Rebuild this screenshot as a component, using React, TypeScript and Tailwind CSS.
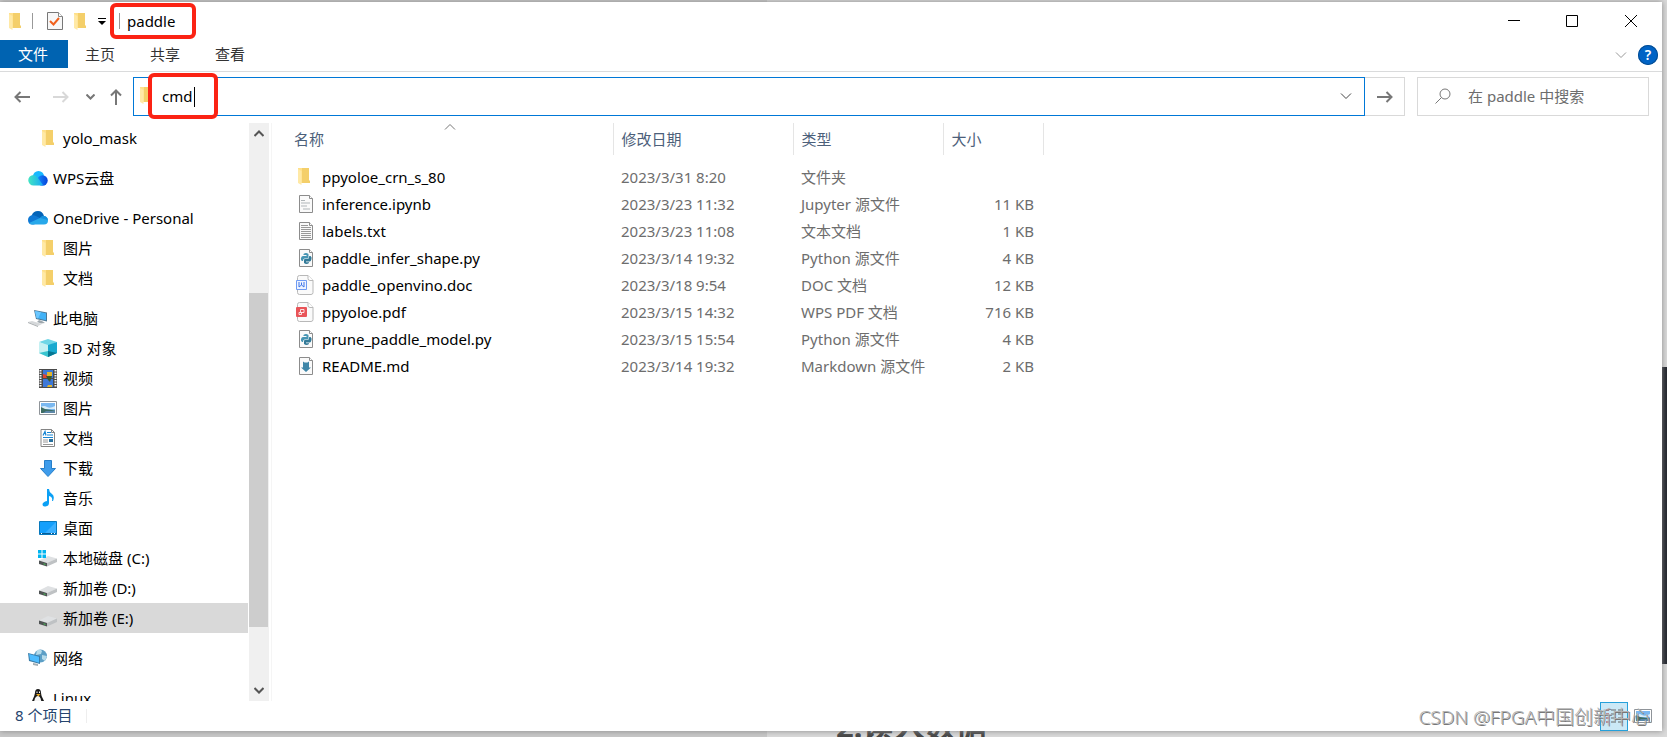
import { useState } from 'react';

const folder = (
  <svg viewBox="0 0 12 17" className="h-[17px] w-3">
    <path d="M0 0h11v13h1v2H0z" fill="#ffe08a" />
    <path d="M4 0h7v12.500h1v2.500H4z" fill="#f4cf6a" />
    <path d="M0 1l3.500 2v14L0 15z" fill="#ffe9a6" />
  </svg>
);

const Sheet = ({ children }: { children?: React.ReactNode }) => (
  <svg viewBox="0 0 16 18" className="h-[18px] w-4">
    <path d="M1.500.5h10l3 3v14h-13z" fill="#fafafa" stroke="#8c8c8c" />
    <path d="M11.500.5v3h3" fill="#fff" stroke="#8c8c8c" />
    {children}
  </svg>
);

const python = (
  <Sheet>
    <path d="M5.500 5Q8 3 10.500 5v3.500q0 1-1 1h-3q-1.500 0-1.500 2.500H4Q2.500 11 3 9t2-2h3.500V6h-3z" fill="#4795b3" />
    <path d="M11 14q-2.500 2-5 0v-3q0-1 1-1h3q1.200 0 1.200-3h1.300Q14 8 13.500 10T12 12.500H8v.8h3z" fill="#337a98" />
  </Sheet>
);

const WpsSheet = ({ color, children }: { color: string; children: React.ReactNode }) => (
  <svg viewBox="0 0 18 20" className="-ml-0.5 h-5 w-[18px]">
    <path d="M3.500.5h8.500l5 5v12q0 2-2 2H3.500q-2 0-2-2v-15q0-2 2-2z" fill="#fafafa" stroke="#b8b8b8" />
    <path d="M12 .5v3q0 2 2 2h3" fill="#fff" stroke="#b8b8b8" />
    <rect y="5" width="11" height="10" rx="1" fill={color} />
    {children}
  </svg>
);

const Drive = ({ windows }: { windows?: boolean }) => (
  <svg viewBox="0 0 20 18" className="h-[18px] w-5">
    <path d="M1 11.500L10 7l9 2.500-9 4.500z" fill="#dfe1e3" />
    <path d="M9 14l10-4.500v3.500L9 17.500z" fill="#bfc2c4" />
    <path d="M1 11.500L9 14v3.500L1 15z" fill="#4f5354" />
    <path d="M5.500 14.200l2 .7v1l-2-.7z" fill="#46c254" />
    {windows && <path d="M0 1h3.500v3.500H0zM4.500 1H8v3.500H4.500zM0 5.500h3.500V9H0zM4.500 5.500H8V9H4.500z" fill="#00b4f0" />}
  </svg>
);

const picture = (
  <svg viewBox="0 0 18 14" className="h-3.5 w-[18px]">
    <path d="M.5.5h17v13H.5z" fill="#fff" stroke="#8f9499" />
    <path d="M2 2h14v10H2z" fill="#7ab8f0" />
    <path d="M2 6q3-2 6 0t8-1v3H2z" fill="#d8ecf8" />
    <path d="M2 6l4 2 10 1.500V12H2z" fill="#3e6d63" />
    <path d="M7 10h9v2H4z" fill="#5c87a8" />
  </svg>
);

const icons: Record<string, React.ReactNode> = {
  folder,
  wps: (
    <svg viewBox="0 0 20 15" className="h-[15px] w-5">
      <defs>
        <linearGradient id="wpsLeft"><stop stopColor="#42e5c2" /><stop offset="1" stopColor="#17a9f5" /></linearGradient>
        <linearGradient id="wpsRight"><stop stopColor="#1289ff" /><stop offset="1" stopColor="#0743d8" /></linearGradient>
      </defs>
      <circle cx="10.500" cy="5.500" r="5.500" fill="#18b8ff" />
      <circle cx="14.500" cy="9.500" r="5.200" fill="url(#wpsRight)" />
      <path d="M5.500 4Q8 4 10 7l5 7q-1 .5-3 .5H5.500a5.200 5.200 0 010-10.500z" fill="url(#wpsLeft)" />
    </svg>
  ),
  onedrive: (
    <svg viewBox="0 0 20 14" className="h-3.5 w-5">
      <path d="M3.500 5Q5 0 10 0q4.500 0 6 5L11 9z" fill="#0364b8" />
      <path d="M4 13.500Q0 13 0 9t4.500-5Q7 4 9 5.500l6 3-9 5z" fill="#0f78d4" />
      <path d="M4 13.500Q2 13.500 1 12l11-5q2-2.500 4.500-2Q20 6 20 9.500q0 4-4 4z" fill="#28a8ea" />
      <path d="M12 7q2-2.500 4.500-2 3 .8 3.400 4z" fill="#1490df" />
    </svg>
  ),
  pc: (
    <svg viewBox="0 0 20 18" className="h-[18px] w-5">
      <path d="M6 1l13 2.500v9L8 10z" fill="#4d7895" />
      <path d="M7 2l11 2.300v7L8.500 9z" fill="#42b2f7" />
      <path d="M7 2l6 1.200L10 9.400 8.500 9z" fill="#6bc7ff" />
      <path d="M11 11l3 1 3 2-4 .5-4-1.500z" fill="#9fa8ae" />
      <path d="M0 13l4-1 10 3-4 2z" fill="#d5d8da" />
      <path d="M0 13l10 4v1L0 14z" fill="#a9adb0" />
    </svg>
  ),
  cube: (
    <svg viewBox="0 0 18 18" className="h-[18px] w-[18px]">
      <path d="M0 3l9-3 9 3-9 4z" fill="#6fd6e6" />
      <path d="M0 3l9 3v12l-9-4z" fill="#c5f1f3" />
      <path d="M18 3L9 6v12l9-4z" fill="#19a9cf" />
      <path d="M9 12l9 2-9 4z" fill="#067792" />
      <path d="M9 12l-9 2 9 4z" fill="#38c4cf" />
    </svg>
  ),
  video: (
    <svg viewBox="0 0 18 19" className="h-[19px] w-[18px]">
      <path d="M0 0h18v19H0z" fill="#4a4a4a" />
      <path d="M1.500 1v17M16.500 1v17" stroke="#f5f5f5" strokeWidth="2" strokeDasharray="1.500 1" />
      <path d="M4 1h10v8H4zM4 10h10v8H4z" fill="#3d78d8" />
      <path d="M4 5l4 1v3H4z" fill="#df4434" />
      <path d="M8 3h5v4H8zM9 16h4v2H8z" fill="#e1b52c" />
      <path d="M7 7h6l-2 6-2-2z" fill="#3a582c" />
    </svg>
  ),
  picture,
  doc: (
    <svg viewBox="0 0 16 18" className="h-[18px] w-4">
      <path d="M1 .5h10.500l3 3v14H1z" fill="#fff" stroke="#858585" />
      <path d="M11.500.5v3h3" fill="none" stroke="#858585" />
      <path d="M3 6.500l2-4 1 4M7 3.500h4M7 6h6M3 8.500h10" fill="none" stroke="#1685d3" strokeWidth="1.200" />
      <path d="M3 11h5M3 13h5M3 15.500h10" stroke="#999" />
      <path d="M9 10h4v3H9z" fill="#276f9d" />
    </svg>
  ),
  download: (
    <svg viewBox="0 0 16 17" className="h-[17px] w-4">
      <path d="M4.500.5h7v8h4L8 16.500.5 8.500h4z" fill="#3e9ceb" stroke="#277fc9" />
    </svg>
  ),
  music: (
    <svg viewBox="0 0 12 18" className="h-[18px] w-3">
      <path d="M5 0h2q0 3 3 5 3 2 1 7h-1q1-4-3-5v7q0 3-3.500 3.500Q.5 18 .5 15.500T5 12z" fill="#0ba0f5" />
    </svg>
  ),
  desktop: (
    <svg viewBox="0 0 18 14" className="h-3.5 w-[18px]">
      <path d="M.5.5h17v13H.5z" fill="#159ffb" stroke="#0879bd" />
      <path d="M6 12L17 1v11z" fill="#3cb0ff" />
      <path d="M1 12.500h16" stroke="#075c94" />
      <path d="M2 12.500h1M12 12.500h1M15 12.500h1" stroke="#fff" />
    </svg>
  ),
  driveC: <Drive windows />,
  drive: <Drive />,
  network: (
    <svg viewBox="0 0 20 18" className="h-[18px] w-5">
      <circle cx="12.500" cy="7" r="6.500" fill="#5c9fc6" />
      <path d="M9 1q4-1 5 1l-1 3-5 1zM14 6l5 1-2 5-3-2z" fill="#b6dbea" />
      <path d="M0 4l12 3v8L1 12z" fill="#3a7da9" />
      <path d="M1 5l10 2.700v6L2 11z" fill="#4dbcff" />
      <path d="M5 14l5 1v2l-5-1z" fill="#a3adb3" />
    </svg>
  ),
  linux: (
    <svg viewBox="0 0 16 18" className="h-[18px] w-4">
      <path d="M5 4q0-4 3-4t3 4q0 3 2.500 7t2 7h-15q0-3 2-7T5 4z" fill="#191919" />
      <path d="M8 7q2 0 3 4t1 7H4q-.5-3 .5-7T8 7z" fill="#f5f5f5" />
      <path d="M6.500 2.500h1V4h-1zM9 2.500h1V4H9z" fill="#fff" />
      <path d="M6 5h4.500L8.500 7.500z" fill="#eba81c" />
    </svg>
  ),
  notebook: <Sheet><path d="M3 5.500h4M3 8h9M3 11h6M5 14h7" stroke="#b0b6b9" /></Sheet>,
  text: <Sheet><path d="M3 3.500h7M3 5.500h10M3 7.500h10M3 9.500h10M3 11.500h10M3 13.500h10M3 15.500h10" stroke="#999" /></Sheet>,
  python,
  word: (
    <WpsSheet color="#6f9bf3">
      <path d="M1 6h9v8H1z" fill="#eff4ff" />
      <path d="M3 7v5l2.500-2L8 12V7M5.500 7.500v2.500" fill="none" stroke="#3d74e8" />
    </WpsSheet>
  ),
  pdf: (
    <WpsSheet color="#e95458">
      <path d="M4.500 10.500v-3H8v3H3v2h2.500v-2" fill="none" stroke="#fff" strokeOpacity=".8" />
    </WpsSheet>
  ),
  markdown: <Sheet><path d="M5 4.500l1.500 1h3l1.500-1v6h2L8 15l-5-4.500h2z" fill="#3f86a8" /></Sheet>,
};

const tree = [
  { name: 'yolo_mask', icon: 'folder', child: true },
  { name: 'WPS云盘', icon: 'wps' },
  { name: 'OneDrive - Personal', icon: 'onedrive' },
  { name: '图片', icon: 'folder', child: true },
  { name: '文档', icon: 'folder', child: true },
  { name: '此电脑', icon: 'pc' },
  { name: '3D 对象', icon: 'cube', child: true },
  { name: '视频', icon: 'video', child: true },
  { name: '图片', icon: 'picture', child: true },
  { name: '文档', icon: 'doc', child: true },
  { name: '下载', icon: 'download', child: true },
  { name: '音乐', icon: 'music', child: true },
  { name: '桌面', icon: 'desktop', child: true },
  { name: '本地磁盘 (C:)', icon: 'driveC', child: true },
  { name: '新加卷 (D:)', icon: 'drive', child: true },
  { name: '新加卷 (E:)', icon: 'drive', child: true, selected: true },
  { name: '网络', icon: 'network' },
  { name: 'Linux', icon: 'linux' },
];

const files = [
  { name: 'ppyoloe_crn_s_80', icon: 'folder', date: '2023/3/31 8:20', type: '文件夹', size: '' },
  { name: 'inference.ipynb', icon: 'notebook', date: '2023/3/23 11:32', type: 'Jupyter 源文件', size: '11 KB' },
  { name: 'labels.txt', icon: 'text', date: '2023/3/23 11:08', type: '文本文档', size: '1 KB' },
  { name: 'paddle_infer_shape.py', icon: 'python', date: '2023/3/14 19:32', type: 'Python 源文件', size: '4 KB' },
  { name: 'paddle_openvino.doc', icon: 'word', date: '2023/3/18 9:54', type: 'DOC 文档', size: '12 KB' },
  { name: 'ppyoloe.pdf', icon: 'pdf', date: '2023/3/15 14:32', type: 'WPS PDF 文档', size: '716 KB' },
  { name: 'prune_paddle_model.py', icon: 'python', date: '2023/3/15 15:54', type: 'Python 源文件', size: '4 KB' },
  { name: 'README.md', icon: 'markdown', date: '2023/3/14 19:32', type: 'Markdown 源文件', size: '2 KB' },
];

const Chevron = ({ up, className }: { up?: boolean; className: string }) => (
  <svg viewBox="0 0 12 8" className={className} fill="none" stroke="currentColor">
    <path d={up ? 'M1 6.500l5-5 5 5' : 'M1 1.500l5 5 5-5'} />
  </svg>
);

const Arrow = ({ className }: { className: string }) => (
  <svg viewBox="0 0 16 12" className={className} fill="none" stroke="currentColor" strokeWidth="2">
    <path d="M0 6h14M9.500 1l5 5-5 5" />
  </svg>
);

function TitleBar() {
  return (
    <header className="flex h-[38px] shrink-0 items-center">
      <div className="flex items-center pl-[9px]">
        {folder}
        <span className="ml-[11px] h-4 w-px bg-[#999]" />
        <button aria-label="属性" className="ml-3.5">
          <svg viewBox="0 0 16 18" className="h-[18px] w-4">
            <path d="M.5.5h11l4 4v13H.5z" fill="#f7f7f7" stroke="#777" />
            <path d="M11.500.5v4h4" fill="#fff" stroke="#888" />
            <path d="M3 9l3.500 3.500L12 6" fill="none" stroke="#f0601c" strokeWidth="2" />
          </svg>
        </button>
        <button aria-label="新建文件夹" className="ml-[11px]">{folder}</button>
        <button aria-label="自定义快速访问工具栏" className="ml-3">
          <svg viewBox="0 0 8 7" className="h-[7px] w-2"><path d="M0 0h8v1H0zM0 3h8L4 7z" /></svg>
        </button>
        <div className="ml-1 flex h-[36px] w-[86px] items-center rounded-md border-4 border-[#fb2314] pl-[5px]">
          <span className="h-4 w-px bg-[#999]" />
          <h1 className="ml-[7px] text-[15px]">paddle</h1>
        </div>
      </div>
      <div className="ml-auto flex items-center pr-[25px]">
        <button aria-label="最小化"><svg viewBox="0 0 12 12" className="h-3 w-3" stroke="#000"><path d="M0 5.500h12" /></svg></button>
        <button aria-label="最大化" className="ml-[46px]"><svg viewBox="0 0 12 12" className="h-3 w-3" stroke="#000" fill="none"><path d="M.5.5h11v11H.5z" /></svg></button>
        <button aria-label="关闭" className="ml-[47px]"><svg viewBox="0 0 12 12" className="h-3 w-3" stroke="#000"><path d="M0 0l12 12M12 0L0 12" /></svg></button>
      </div>
    </header>
  );
}

function Ribbon() {
  return (
    <nav className="flex h-8 shrink-0 items-start border-b border-[#dadbdc] text-[#333]">
      <button className="h-7 w-[68px] bg-[#0063b1] pr-0.5 text-white">文件</button>
      <button className="ml-[17px] h-7">主页</button>
      <button className="ml-[35px] h-7">共享</button>
      <button className="ml-[35px] h-7">查看</button>
      <button aria-label="展开功能区" className="ml-auto h-[30px] text-[#999]"><Chevron className="h-2 w-3.5" /></button>
      <button className="mt-[5px] mr-1 ml-2.5 h-5 w-5 rounded-full bg-[#0063c5] text-sm leading-5 font-semibold text-white ring-1 ring-[#064d91] ring-inset">?</button>
    </nav>
  );
}

function AddressBar() {
  const [path, setPath] = useState('cmd');
  const [query, setQuery] = useState('');

  return (
    <div className="flex shrink-0 items-center pt-[5px] pr-[13px] pb-[7px]">
      <div className="flex w-[133px] shrink-0 items-center pl-3.5 text-[#777]">
        <button aria-label="后退"><Arrow className="h-3 w-4 rotate-180" /></button>
        <button aria-label="前进" className="ml-[23px] text-[#d8d8d8]"><Arrow className="h-3 w-4" /></button>
        <button aria-label="最近浏览的位置" className="ml-[17px]">
          <svg viewBox="0 0 9 6" className="h-1.5 w-[9px]" fill="none" stroke="currentColor" strokeWidth="2"><path d="M.5.5l4 4 4-4" /></svg>
        </button>
        <button aria-label="上移" className="ml-[13px]"><Arrow className="h-3 w-4 -rotate-90" /></button>
      </div>
      <div className="relative flex h-[39px] flex-1 items-center border border-[#0078d7] pb-0.5 pl-1.5">
        {folder}
        <div className="absolute -top-[5px] left-3.5 h-[46px] w-[70px] rounded-md border-4 border-[#fb2314] bg-white">
          <span className="absolute top-2.5 left-[42px] h-5 w-px bg-black" />
        </div>
        <input aria-label="地址" value={path} onChange={e => setPath(e.target.value)} className="relative ml-2.5 h-6 min-w-0 flex-1 text-black outline-none" />
        <button aria-label="以前的位置" className="mr-3 text-[#444]"><Chevron className="h-2 w-3" /></button>
      </div>
      <button aria-label="转到" className="flex h-[39px] w-10 items-center justify-center border border-l-0 border-[#d9d9d9] text-[#777]">
        <Arrow className="h-3 w-4" />
      </button>
      <label className="ml-3 flex h-[39px] w-[232px] items-center border border-[#d9d9d9] pb-0.5 pl-[17px]">
        <svg viewBox="0 0 16 16" className="h-4 w-4 shrink-0" fill="none" stroke="#777"><circle cx="10" cy="6" r="5" /><path d="M6.500 9.500L.5 15.500" /></svg>
        <input aria-label="搜索" value={query} onChange={e => setQuery(e.target.value)} placeholder="在 paddle 中搜索" className="ml-[17px] min-w-0 flex-1 outline-none placeholder:text-[#6d6d6d]" />
      </label>
    </div>
  );
}

function Sidebar() {
  return (
    <aside className="flex w-[269px] shrink-0">
      <ul className="mr-px flex-1 overflow-hidden text-black">
        {tree.map((item, i) => (
          <li key={i} className={item.child ? '' : 'mt-2.5'}>
            <a href="#" className={`flex h-[30px] items-center ${item.child ? 'pl-[37px]' : 'pl-[27px]'} ${item.selected ? 'bg-[#d9d9d9]' : ''}`}>
              <span className="mr-[5px] flex w-[21px] shrink-0 justify-center">{icons[item.icon]}</span>
              {item.name}
            </a>
          </li>
        ))}
      </ul>
      <div className="flex w-5 flex-col items-center bg-[#f0f0f0] text-[#555]">
        <svg viewBox="0 0 10 7" className="mt-[7px] h-[7px] w-2.5" fill="none" stroke="currentColor" strokeWidth="2"><path d="M.5 6l4.500-4.500L9.500 6" /></svg>
        <div className="mt-[156px] mr-px h-[334px] w-[19px] bg-[#cdcdcd]" />
        <svg viewBox="0 0 10 7" className="mt-auto mb-[7px] h-[7px] w-2.5" fill="none" stroke="currentColor" strokeWidth="2"><path d="M.5 1L5 5.500 9.500 1" /></svg>
      </div>
    </aside>
  );
}

function FileList() {
  return (
    <main className="ml-0.5 min-w-0 flex-1 border-l border-[#f5f5f5] pl-3.5">
      <table className="w-[757px] table-fixed border-collapse text-left text-[#6d6d6d]">
        <thead className="text-[#4c607a]">
          <tr className="h-8">
            <th className="relative w-[327px] border-r border-[#e5e5e5] pl-2 font-normal">
              名称
              <Chevron up className="absolute top-0 left-[158px] h-2 w-3 text-[#777]" />
            </th>
            <th className="w-[180px] border-r border-[#e5e5e5] pl-2 font-normal">修改日期</th>
            <th className="w-[150px] border-r border-[#e5e5e5] pl-2 font-normal">类型</th>
            <th className="w-[100px] border-r border-[#e5e5e5] pl-2 font-normal">大小</th>
          </tr>
        </thead>
        <tbody className="before:block before:h-2">
          {files.map(f => (
            <tr key={f.name} className="h-[27px]">
              <td className="p-0 pl-3 text-black">
                <div className="flex items-center">
                  <span className="w-6 shrink-0">{icons[f.icon]}</span>
                  {f.name}
                </div>
              </td>
              <td className="p-0 pl-2">{f.date}</td>
              <td className="p-0 pl-2">{f.type}</td>
              <td className="p-0 pr-[9px] text-right">{f.size}</td>
            </tr>
          ))}
        </tbody>
      </table>
    </main>
  );
}

function StatusBar() {
  return (
    <footer className="relative flex h-[30px] shrink-0 items-center pl-[15px] text-[#26456e]">
      <span className="pb-[3px]">8 个项目</span>
      <span className="ml-3.5 h-3.5 w-px bg-[#eee]" />
      <button aria-label="详细信息" className="ml-auto flex h-[29px] w-7 items-center justify-center border border-[#26a0da] bg-[#cbe8f6]">
        <svg viewBox="0 0 18 14" className="h-3.5 w-[18px]"><path d="M1 1h3M1 5h3M1 9h3M1 13h3" stroke="#a33" /><path d="M6 1h5M13 1h5M6 5h5M13 5h5M6 9h5M13 9h5M6 13h5M13 13h5" stroke="#666" /></svg>
      </button>
      <button aria-label="大图标" className="mr-2.5 ml-1.5">{picture}</button>
      <p className="absolute right-3 bottom-0 text-[19px] leading-[27px] font-light text-[#b4b4b4] [text-shadow:1px_1px_0_#777]">CSDN @FPGA中国创新中心</p>
    </footer>
  );
}

export default function App() {
  return (
    <div className="relative flex h-screen flex-col overflow-hidden bg-[#dadada] pt-0.5 pr-[5px] pb-1.5 font-['Noto_Sans','Noto_Sans_CJK_SC',sans-serif] text-[15px] leading-6">
      <div className="absolute inset-y-0 left-0 w-[46%] bg-[#c8c8c8]" />
      <div className="absolute top-[367px] right-0 h-[297px] w-[5px] bg-[#20232b]" />
      <div className="absolute -bottom-1 left-[836px] text-[31px] leading-[30px] font-bold text-[#444]">2.读入数据</div>
      <div className="relative flex min-h-0 flex-1 flex-col bg-white shadow-[0_0_6px_#888]">
        <TitleBar />
        <Ribbon />
        <AddressBar />
        <div className="flex min-h-0 flex-1">
          <Sidebar />
          <FileList />
        </div>
        <StatusBar />
      </div>
    </div>
  );
}
